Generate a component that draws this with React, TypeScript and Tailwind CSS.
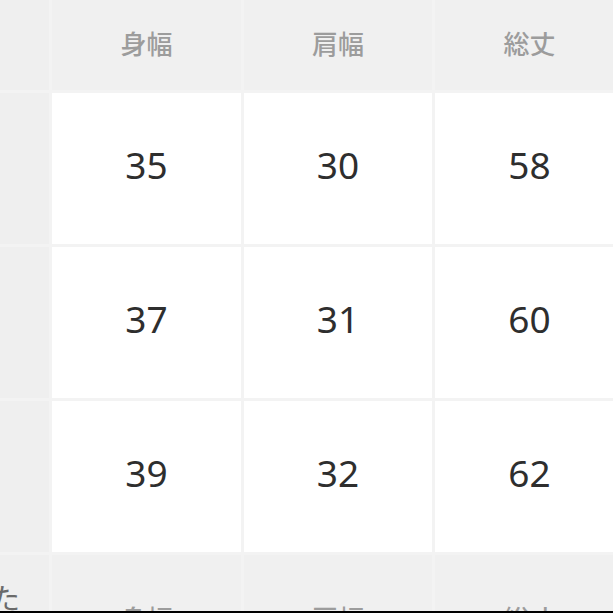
import React from 'react';

const heads = ['身幅', '肩幅', '総丈'];
const rows = [
  ['35', '30', '58'],
  ['37', '31', '60'],
  ['39', '32', '62'],
];

const jp = { fontFamily: '"Noto Sans CJK JP", "Noto Sans", sans-serif' };

const HeaderRow = ({ label }: { label?: string }) => (
  <>
    <div className="h-[110px] bg-[#efefef] flex items-start pt-[28px] overflow-hidden">
      {label && (
        <span className="text-[29px] text-[#6a6a6a] -ml-[9px] leading-none" style={jp}>
          {label}
        </span>
      )}
    </div>
    {heads.map((h) => (
      <div
        key={h}
        className="h-[110px] bg-[#f0f0f0] flex items-center justify-center pt-[16px]"
      >
        <span className="text-[26px] text-[#9c9c9c] font-medium leading-none" style={jp}>
          {h}
        </span>
      </div>
    ))}
  </>
);

export default function App() {
  return (
    <div className="w-[613px] h-[613px] overflow-hidden bg-[#efefef] relative">
      <div className="-mt-[20px] grid grid-cols-[49px_189px_188px_189px] gap-[3px] bg-[#f3f3f3]">
        <HeaderRow />
        {rows.map((r, i) => (
          <React.Fragment key={i}>
            <div className="h-[151px] bg-[#efefef]" />
            {r.map((v, j) => (
              <div
                key={j}
                className="h-[151px] bg-white flex items-center justify-center pb-[8px]"
              >
                <span
                  className="text-[37px] text-[#2e2e2e] leading-none"
                  style={{ fontFamily: '"Noto Sans", sans-serif' }}
                >
                  {v}
                </span>
              </div>
            ))}
          </React.Fragment>
        ))}
        <HeaderRow label="た" />
      </div>
      <div className="absolute left-0 right-0 bottom-0 h-[2px] bg-black" />
    </div>
  );
}
